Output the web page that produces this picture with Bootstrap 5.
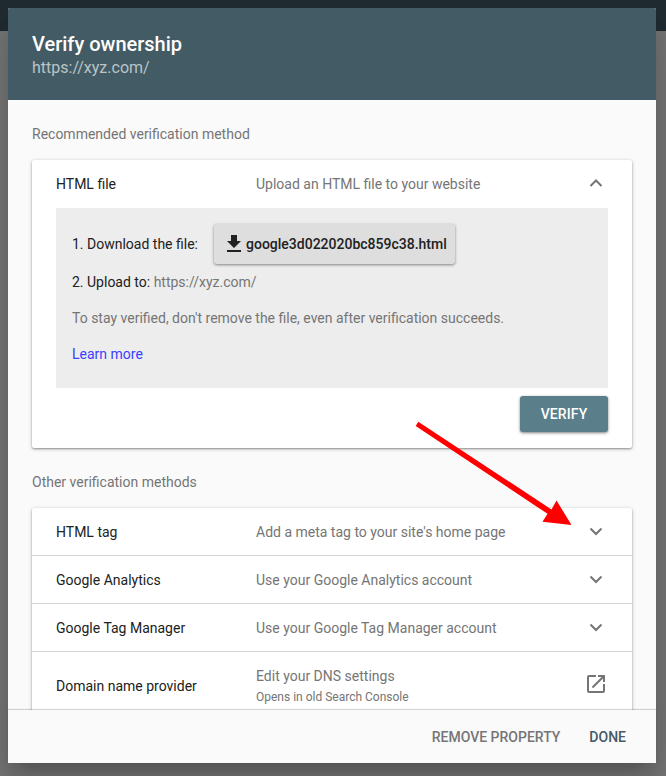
<!DOCTYPE html>
<html lang="en">
<head>
<meta charset="utf-8">
<meta name="viewport" content="width=device-width, initial-scale=1">
<title>Verify ownership</title>
<link href="https://cdn.jsdelivr.net/npm/bootstrap@5.3.0/dist/css/bootstrap.min.css" rel="stylesheet">
<style>
body{font-family:Roboto,"Liberation Sans",sans-serif;font-size:14px;line-height:20px;color:#212121;background:linear-gradient(#202c32 31px,#757575 31px);height:776px;overflow:hidden}
.dialog-box{width:648px;height:755px;margin:8px 0 0 8px;background:#fafafa;border-radius:2px;box-shadow:0 11px 15px -7px rgba(0,0,0,.2),0 9px 46px 8px rgba(0,0,0,.03),0 24px 38px 3px rgba(0,0,0,.14)}
.dialog-head{height:92px;background:#435b64;padding:24px 24px 0;border-radius:2px 2px 0 0}
.dialog-head h1{font-size:20px;line-height:24px;font-weight:500;color:#fff}
.site-url{font-size:16px;line-height:24px;color:#bac4c8}
.grey{color:#757575}
.section-title{height:60px;padding-top:24px}
.panel{background:#fff;border-radius:2px;box-shadow:0 1px 4px rgba(0,0,0,.2),0 1px 2px rgba(0,0,0,.32)}
.method{height:48px;padding:0 24px}
.ruled{box-shadow:inset 0 -1px #d6d6d6}
.method-name{width:200px}
.method-tall{height:68px}
.method-note{font-size:12px;line-height:18px;padding-top:2px}
.steps{height:180px;margin:0 24px;padding:16px;background:#ededed}
.file-btn{height:40px;width:241px;margin-left:16px;padding:0 0 0 8px;background:#dedede;color:#212121;border:0;border-radius:3px;font-size:14px;font-weight:500;box-shadow:0 1px 3px rgba(0,0,0,.45)}
.verify-btn,.verify-btn:hover{width:88px;height:36px;padding:0;background:#5b7e8b;color:#fff;border:0;border-radius:3px;font-size:14px;font-weight:500;letter-spacing:.1px;box-shadow:0 1px 3px rgba(0,0,0,.5)}
.learn{color:#3b3fff}
.dialog-foot{height:53px;background:#fafafa;box-shadow:0 -1px 1px 0 rgba(0,0,0,.16);padding-right:30px;gap:29px;z-index:1}
.foot-btn{font-size:14px;font-weight:500;padding:0;border:0;line-height:20px}
.teal{color:#455a64}
.pointer{left:0;top:0;z-index:3;pointer-events:none}
</style>
<script src="https://cdn.jsdelivr.net/npm/bootstrap@5.3.0/dist/js/bootstrap.bundle.min.js"></script>
</head>
<body>
<div class="d-flex">
<main class="dialog-box d-flex flex-column">
  <header class="dialog-head flex-shrink-0">
    <h1 class="m-0">Verify ownership</h1>
    <div class="site-url">https://xyz.com/</div>
  </header>
  <div class="flex-grow-1 overflow-hidden px-4">
    <div class="section-title grey">Recommended verification method</div>
    <section class="panel">
      <div class="method d-flex align-items-center">
        <div class="method-name">HTML file</div>
        <div class="grey flex-grow-1">Upload an HTML file to your website</div>
        <svg width="24" height="24" viewBox="0 0 24 24"><path d="M6.5 14 12 8.5 17.5 14" fill="none" stroke="#757575" stroke-width="2"/></svg>
      </div>
      <div class="steps">
        <div class="d-flex align-items-center">
          <span>1. Download the file:</span>
          <button class="btn file-btn d-flex align-items-center" type="button">
            <svg width="24" height="24" viewBox="0 0 24 24" fill="#212121"><path d="M19 9h-4V3H9v6H5l7 7 7-7zM5 18v2h14v-2H5z"/></svg>
            <span>google3d022020bc859c38.html</span>
          </button>
        </div>
        <div class="mt-2">2. Upload to: <span class="grey">https://xyz.com/</span></div>
        <p class="grey mt-3 mb-3">To stay verified, don't remove the file, even after verification succeeds.</p>
        <a class="learn text-decoration-none" href="#">Learn more</a>
      </div>
      <div class="d-flex justify-content-end px-4 pt-2 pb-3"><button class="btn verify-btn" type="button">VERIFY</button></div>
    </section>
    <div class="section-title grey">Other verification methods</div>
    <section class="panel">
      <div class="method ruled d-flex align-items-center">
        <div class="method-name">HTML tag</div>
        <div class="grey flex-grow-1">Add a meta tag to your site's home page</div>
        <svg width="24" height="24" viewBox="0 0 24 24"><path d="M6.5 8.5 12 14 17.5 8.5" fill="none" stroke="#757575" stroke-width="2"/></svg>
      </div>
      <div class="method ruled d-flex align-items-center">
        <div class="method-name">Google Analytics</div>
        <div class="grey flex-grow-1">Use your Google Analytics account</div>
        <svg width="24" height="24" viewBox="0 0 24 24"><path d="M6.5 8.5 12 14 17.5 8.5" fill="none" stroke="#757575" stroke-width="2"/></svg>
      </div>
      <div class="method ruled d-flex align-items-center">
        <div class="method-name">Google Tag Manager</div>
        <div class="grey flex-grow-1">Use your Google Tag Manager account</div>
        <svg width="24" height="24" viewBox="0 0 24 24"><path d="M6.5 8.5 12 14 17.5 8.5" fill="none" stroke="#757575" stroke-width="2"/></svg>
      </div>
      <div class="method method-tall d-flex align-items-center">
        <div class="method-name">Domain name provider</div>
        <div class="grey flex-grow-1">Edit your DNS settings<div class="method-note">Opens in old Search Console</div></div>
        <svg class="mb-1" width="24" height="24" viewBox="0 0 24 24" fill="#757575"><path d="M19 19H5V5h7V3H5a2 2 0 0 0-2 2v14a2 2 0 0 0 2 2h14c1.100 0 2-.9 2-2v-7h-2v7zM14 3v2h3.590l-9.830 9.830 1.410 1.410L19 6.410V10h2V3h-7z"/></svg>
      </div>
    </section>
  </div>
  <footer class="dialog-foot position-relative d-flex align-items-center justify-content-end flex-shrink-0">
    <button class="btn foot-btn grey" type="button">REMOVE PROPERTY</button>
    <button class="btn foot-btn teal" type="button">DONE</button>
  </footer>
</main>
</div>
<svg class="pointer position-absolute" width="666" height="776" viewBox="0 0 666 776"><path d="M418.300 421.800 551.500 509.500 556.500 500.500 571.500 525 542.500 521.700 547.500 513.800 415.700 426Z" fill="#f00"/></svg>
</body>
</html>
